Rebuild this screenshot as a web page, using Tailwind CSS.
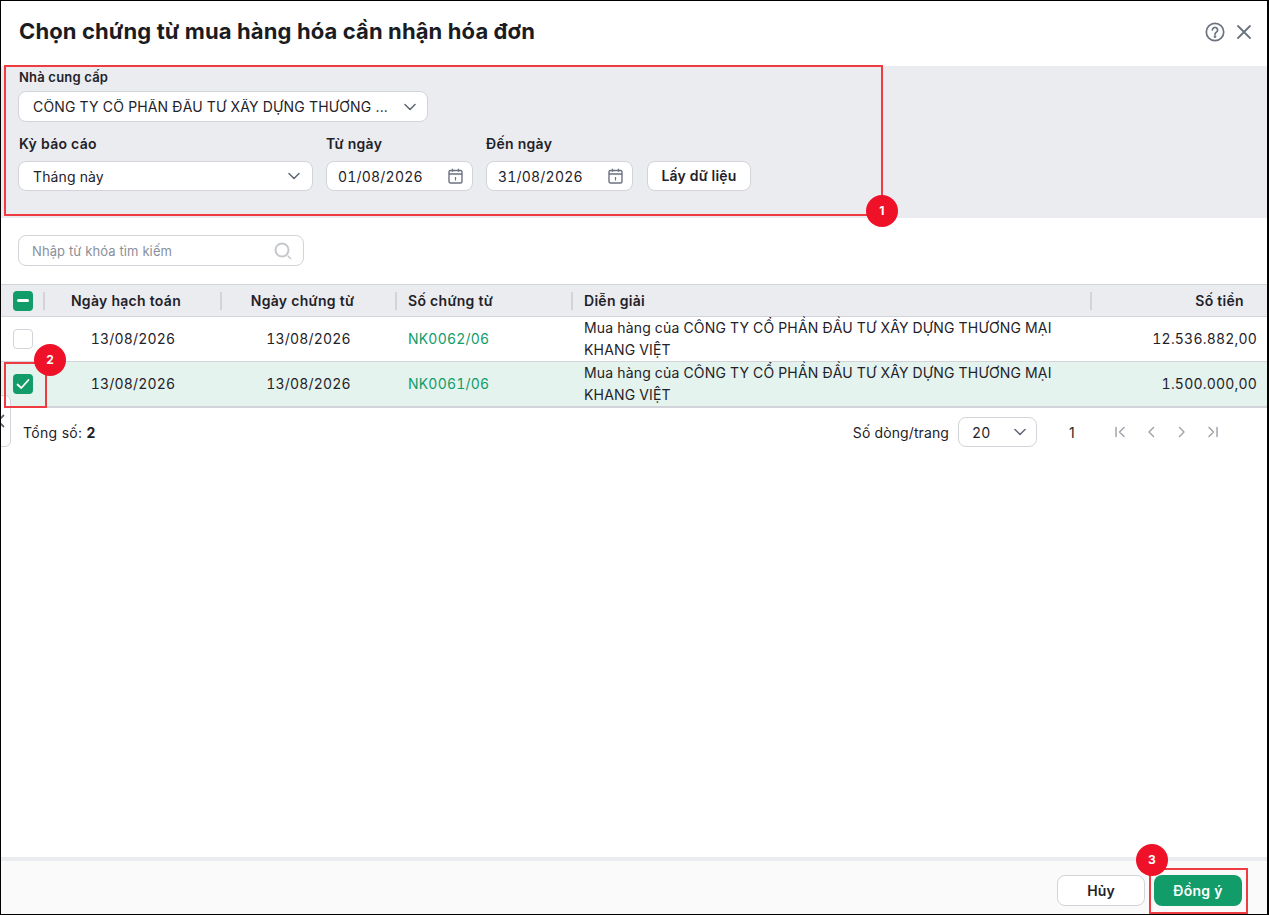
<!DOCTYPE html>
<html lang="vi">
<head>
    <meta charset="UTF-8">
    <title>Chọn chứng từ mua hàng hóa cần nhận hóa đơn</title>
    <script src="https://cdn.jsdelivr.net/npm/@tailwindcss/browser@4"></script>
</head>
<body class="bg-white font-['Inter',sans-serif] text-[14px] tracking-[0.11px] text-[#1f2229]">
<div class="relative w-[1269px] h-[915px] overflow-hidden flex flex-col border border-black border-r-2 bg-white">

    <!-- header -->
    <div class="h-[65px] shrink-0 flex items-center justify-between pl-[18px] pr-[13px] pb-[4px]">
        <h1 class="text-[22px] font-bold tracking-[0.12px] text-[#1a1c22]">Chọn chứng từ mua hàng hóa cần nhận hóa đơn</h1>
        <div class="flex items-center gap-[9px] text-[#6b7280]">
            <svg width="20" height="20" viewBox="0 0 20 20" fill="none" stroke="currentColor" stroke-width="1.7"><circle cx="10" cy="10" r="8.7"/><path d="M7.4 7.9a2.6 2.6 0 1 1 3.9 2.3c-.9.5-1.3 1-1.3 2" stroke-linecap="round"/><circle cx="10" cy="14.6" r=".6" fill="currentColor"/></svg>
            <svg width="20" height="20" viewBox="0 0 20 20" fill="none" stroke="currentColor" stroke-width="1.8" stroke-linecap="round"><path d="M4 4l12 12M16 4L4 16"/></svg>
        </div>
    </div>

    <!-- filters -->
    <div class="h-[152px] shrink-0 bg-[#ebecf0] pl-[17px] pt-[2px]">
        <div class="pl-[1px] font-semibold text-[13px] tracking-[0.2px] leading-[18px] h-[20px]">Nhà cung cấp</div>
        <div class="mt-[3px] w-[410px] h-[31px] bg-white border border-[#d2d4da] rounded-[8px] flex items-center justify-between pl-[14px] pr-[10px]">
            <span class="block h-[16px] leading-[16px] overflow-hidden tracking-[0.15px]">CÔNG TY CỔ PHẦN ĐẦU TƯ XÂY DỰNG THƯƠNG ...</span>
            <svg width="14" height="14" viewBox="0 0 14 14" fill="none" stroke="#5f6672" stroke-width="1.5" stroke-linecap="round" stroke-linejoin="round"><path d="M2 4.5l5 5 5-5"/></svg>
        </div>
        <div class="mt-[12px] flex items-end">
            <div>
                <div class="pl-[1px] font-semibold tracking-[0.3px] leading-[20px]">Kỳ báo cáo</div>
                <div class="mt-[7px] w-[295px] h-[30px] bg-white border border-[#d2d4da] rounded-[8px] flex items-center justify-between pl-[14px] pr-[11px]">
                    <span>Tháng này</span>
                    <svg width="14" height="14" viewBox="0 0 14 14" fill="none" stroke="#5f6672" stroke-width="1.5" stroke-linecap="round" stroke-linejoin="round"><path d="M2 4.5l5 5 5-5"/></svg>
                </div>
            </div>
            <div class="ml-[13px]">
                <div class="font-semibold tracking-[0.3px] leading-[20px]">Từ ngày</div>
                <div class="mt-[7px] w-[147px] h-[30px] bg-white border border-[#d2d4da] rounded-[8px] flex items-center justify-between pl-[11px] pr-[9px]">
                    <span class="tabular-nums tracking-[0.2px]">01/08/2026</span>
                    <svg width="15" height="16" viewBox="0 0 15 16" fill="none" stroke="#6b7280" stroke-width="1.4"><rect x="1" y="2.5" width="13" height="12.5" rx="1.5"/><path d="M1 6h13M4.5 .8v3M10.5 .8v3"/><path d="M7.5 9v3.5" stroke-width="1.2"/></svg>
                </div>
            </div>
            <div class="ml-[13px]">
                <div class="font-semibold tracking-[0.3px] leading-[20px]">Đến ngày</div>
                <div class="mt-[7px] w-[147px] h-[30px] bg-white border border-[#d2d4da] rounded-[8px] flex items-center justify-between pl-[11px] pr-[9px]">
                    <span class="tabular-nums tracking-[0.2px]">31/08/2026</span>
                    <svg width="15" height="16" viewBox="0 0 15 16" fill="none" stroke="#6b7280" stroke-width="1.4"><rect x="1" y="2.5" width="13" height="12.5" rx="1.5"/><path d="M1 6h13M4.5 .8v3M10.5 .8v3"/><path d="M7.5 9v3.5" stroke-width="1.2"/></svg>
                </div>
            </div>
            <button class="ml-[14px] w-[104px] h-[30px] pb-[1px] bg-white border border-[#d2d4da] rounded-[8px] font-semibold tracking-[0.2px]">Lấy dữ liệu</button>
        </div>
    </div>

    <!-- search -->
    <div class="h-[66px] shrink-0 pl-[17px] pt-[17px]">
        <div class="w-[286px] h-[31px] border border-[#d2d4da] rounded-[8px] flex items-center justify-between pl-[13px] pr-[11px]">
            <span class="text-[13px] text-[#8a8f99] pt-[2px]">Nhập từ khóa tìm kiếm</span>
            <svg width="18" height="18" viewBox="0 0 18 18" fill="none" stroke="#c4c7cd" stroke-width="2" stroke-linecap="round"><circle cx="8" cy="8" r="6.5"/><path d="M14 14l2.5 2.5" stroke-width="1.5"/></svg>
        </div>
    </div>

    <!-- table -->
    <div class="shrink-0 border-t border-b-2 border-[#d2d4da]">
        <div class="grid grid-cols-[44px_176px_175px_176px_519px_1fr] h-[32px] bg-[#ebecf0] border-b border-[#d2d4da] items-center font-semibold tracking-[0.3px]">
            <div class="flex items-center justify-between h-full pl-[12px]">
                <span class="w-[20px] h-[20px] rounded-[4px] bg-[#129c69] flex items-center justify-center"><span class="w-[12px] h-[2.5px] bg-white rounded-full"></span></span>
                <span class="w-[2px] h-[18px] bg-[#d2d4da]"></span>
            </div>
            <div class="h-full flex items-center justify-center pr-[14px] relative">Ngày hạch toán<span class="absolute right-[-1px] w-[2px] h-[18px] bg-[#d2d4da]"></span></div>
            <div class="h-full flex items-center justify-center pr-[12px] relative">Ngày chứng từ<span class="absolute right-[-1px] w-[2px] h-[18px] bg-[#d2d4da]"></span></div>
            <div class="h-full flex items-center pl-[12px] relative">Số chứng từ<span class="absolute right-[-1px] w-[2px] h-[18px] bg-[#d2d4da]"></span></div>
            <div class="h-full flex items-center pl-[12px] relative">Diễn giải<span class="absolute right-[-1px] w-[2px] h-[18px] bg-[#d2d4da]"></span></div>
            <div class="h-full flex items-center justify-end pr-[23px]">Số tiền</div>
        </div>
        <div class="grid grid-cols-[44px_176px_175px_176px_519px_1fr] h-[45px] border-b border-[#d2d4da] items-center tabular-nums tracking-[0.2px]">
            <div class="pl-[12px]"><span class="block w-[20px] h-[20px] rounded-[4px] bg-white border border-[#d2d4da]"></span></div>
            <div class="text-center pb-[1px]">13/08/2026</div>
            <div class="text-center pb-[1px]">13/08/2026</div>
            <div class="pl-[12px] pb-[1px] text-[#129c69]">NK0062/06</div>
            <div class="pl-[12px] leading-[22px] tracking-[0.17px]">Mua hàng của CÔNG TY CỔ PHẦN ĐẦU TƯ XÂY DỰNG THƯƠNG MẠI KHANG VIỆT</div>
            <div class="text-right pr-[10px] pb-[1px]">12.536.882,00</div>
        </div>
        <div class="grid grid-cols-[44px_176px_175px_176px_519px_1fr] h-[44px] bg-[#e4f3ee] items-center tabular-nums tracking-[0.2px]">
            <div class="pl-[12px]">
                <span class="w-[20px] h-[20px] rounded-[4px] bg-[#129c69] flex items-center justify-center">
                    <svg width="14" height="14" viewBox="0 0 14 14" fill="none" stroke="#fff" stroke-width="1.8" stroke-linecap="round" stroke-linejoin="round"><path d="M1.5 7.5l3.8 3.5 7.2-8"/></svg>
                </span>
            </div>
            <div class="text-center pb-[1px]">13/08/2026</div>
            <div class="text-center pb-[1px]">13/08/2026</div>
            <div class="pl-[12px] pb-[1px] text-[#129c69]">NK0061/06</div>
            <div class="pl-[12px] leading-[22px] tracking-[0.17px]">Mua hàng của CÔNG TY CỔ PHẦN ĐẦU TƯ XÂY DỰNG THƯƠNG MẠI KHANG VIỆT</div>
            <div class="text-right pr-[10px] pb-[1px]">1.500.000,00</div>
        </div>
    </div>

    <!-- pagination -->
    <div class="h-[50px] shrink-0 flex items-center justify-between pl-[22px] pb-[2px]">
        <div class="tracking-[0.3px]">Tổng số: <b class="font-bold">2</b></div>
        <div class="flex items-center">
            <span>Số dòng/trang</span>
            <div class="ml-[9px] w-[79px] h-[30px] border border-[#d2d4da] rounded-[8px] flex items-center justify-between pl-[13px] pr-[9px]">
                <span class="tabular-nums">20</span>
                <svg width="14" height="14" viewBox="0 0 14 14" fill="none" stroke="#5f6672" stroke-width="1.5" stroke-linecap="round" stroke-linejoin="round"><path d="M2 4.5l5 5 5-5"/></svg>
            </div>
            <span class="ml-[32px] w-[10px]">1</span>
            <div class="ml-[34px] mr-[47px] flex items-center gap-[17px]">
                <svg width="14" height="14" viewBox="0 0 14 14" fill="none" stroke="#9b9fa8" stroke-width="1.4" stroke-linecap="round" stroke-linejoin="round"><path d="M3 2.5v9M11 2.5L6.5 7l4.5 4.5"/></svg>
                <svg width="14" height="14" viewBox="0 0 14 14" fill="none" stroke="#9b9fa8" stroke-width="1.4" stroke-linecap="round" stroke-linejoin="round"><path d="M9.5 2.5L5 7l4.5 4.5"/></svg>
                <svg width="14" height="14" viewBox="0 0 14 14" fill="none" stroke="#9b9fa8" stroke-width="1.4" stroke-linecap="round" stroke-linejoin="round"><path d="M4.5 2.5L9 7l-4.5 4.5"/></svg>
                <svg width="14" height="14" viewBox="0 0 14 14" fill="none" stroke="#9b9fa8" stroke-width="1.4" stroke-linecap="round" stroke-linejoin="round"><path d="M11 2.5v9M3 2.5L7.5 7 3 11.5"/></svg>
            </div>
        </div>
    </div>

    <div class="flex-1"></div>

    <!-- footer -->
    <div class="h-[57px] shrink-0 bg-[#fafafa] border-t-4 border-[#ebecf0] flex items-center justify-end gap-[9px] pr-[25px] pt-[5px]">
        <button class="w-[88px] h-[31px] bg-white border border-[#d2d4da] rounded-[8px] font-semibold">Hủy</button>
        <button class="w-[88px] h-[31px] bg-[#129c69] rounded-[8px] font-semibold tracking-[0.3px] text-white">Đồng ý</button>
    </div>

    <!-- collapsed side handle -->
    <div class="absolute left-[-12px] top-[394px] w-[22px] h-[52px] bg-white border border-[#d2d4da] rounded-[6px] flex items-center justify-end pr-[4px]">
        <svg width="10" height="14" viewBox="0 0 10 14" fill="none" stroke="#5f6672" stroke-width="1.8"><path d="M8 1L2 7l6 6"/></svg>
    </div>

    <!-- annotations -->
    <div class="absolute left-[3px] top-[64px] w-[879px] h-[151px] border-2 border-[#ef3b42]"></div>
    <div class="absolute left-[3px] top-[361px] w-[43px] h-[46px] border-2 border-[#ef3b42]"></div>
    <div class="absolute left-[1148px] top-[867px] w-[99px] h-[46px] border-2 border-[#ef3b42]"></div>
    <div class="absolute left-[865px] top-[194px] w-[32px] h-[32px] rounded-full bg-[#ee1128] text-white text-[12px] font-bold flex items-center justify-center">1</div>
    <div class="absolute left-[33px] top-[343px] w-[32px] h-[32px] rounded-full bg-[#ee1128] text-white text-[12px] font-bold flex items-center justify-center">2</div>
    <div class="absolute left-[1135px] top-[843px] w-[32px] h-[32px] rounded-full bg-[#ee1128] text-white text-[12px] font-bold flex items-center justify-center">3</div>
</div>
</body>
</html>
